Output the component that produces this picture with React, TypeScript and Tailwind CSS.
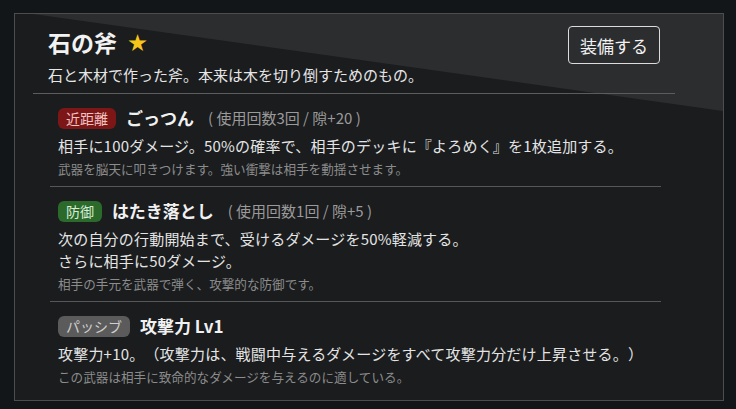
import React from 'react'

type Skill = {
  id: number
  tag: string
  tagClass: string
  name: string
  meta?: string
  lines: string[]
  flavor: string
}

const skills: Skill[] = [
  {
    id: 1,
    tag: '近距離',
    tagClass: 'bg-[#7d1616] text-[#f2c4c4]',
    name: 'ごっつん',
    meta: '( 使用回数3回 / 隙+20 )',
    lines: ['相手に100ダメージ。50%の確率で、相手のデッキに『よろめく』を1枚追加する。'],
    flavor: '武器を脳天に叩きつけます。強い衝撃は相手を動揺させます。',
  },
  {
    id: 2,
    tag: '防御',
    tagClass: 'bg-[#2b6a2b] text-[#d6ecd6]',
    name: 'はたき落とし',
    meta: '( 使用回数1回 / 隙+5 )',
    lines: ['次の自分の行動開始まで、受けるダメージを50%軽減する。', 'さらに相手に50ダメージ。'],
    flavor: '相手の手元を武器で弾く、攻撃的な防御です。',
  },
  {
    id: 3,
    tag: 'パッシブ',
    tagClass: 'bg-[#5b5b5b] text-[#cfcfcf]',
    name: '攻撃力 Lv1',
    lines: ['攻撃力+10。（攻撃力は、戦闘中与えるダメージをすべて攻撃力分だけ上昇させる。）'],
    flavor: 'この武器は相手に致命的なダメージを与えるのに適している。',
  },
]

function SkillRow({ skill, last }: { skill: Skill; last: boolean }) {
  return (
    <div className={last ? 'px-2 pt-3' : 'px-2 pt-3 pb-2 border-b border-[#555759]'}>
      <div className="flex items-center h-6">
        <span className={`rounded-md px-2 text-[14px] leading-[21px] ${skill.tagClass}`}>{skill.tag}</span>
        <span className="ml-[10px] text-[17px] font-bold text-[#f1f1f1] leading-6">{skill.name}</span>
        {skill.meta && <span className="ml-[14px] text-[15px] text-[#9a9a9a] leading-6">{skill.meta}</span>}
      </div>
      <div className="mt-[5px] text-[15px] leading-[22px] text-[#e4e4e4] tracking-[0.2px]">
        {skill.lines.map((l, i) => (
          <div key={i}>{l}</div>
        ))}
      </div>
      <div className="mt-[3px] text-[12.6px] leading-[18px] text-[#8c8c8c]">{skill.flavor}</div>
    </div>
  )
}

export default function App() {
  return (
    <div
      className="w-[736px] h-[409px] bg-[#131619] pt-[13px] pl-[14px] [text-spacing-trim:space-all]"
      style={{ fontFamily: '"Noto Sans CJK JP", "Noto Sans", sans-serif' }}
    >
      <div className="relative w-[710px] h-[388px] border border-[#4b4d4f] bg-[#1a1c1e] overflow-hidden">
        <div className="absolute inset-0 bg-[#2c2d2f] [clip-path:polygon(18px_0,100%_0,100%_97px)]" />
        <div className="relative pl-[18px] pr-[48px]">
          <div className="px-[15px] pt-[12px] pb-[7px] border-b border-[#5a5c5e]">
            <div className="flex items-start justify-between">
              <div className="mt-[1px] flex items-center h-[30px]">
                <span className="text-[23px] font-bold text-[#f2f2f2] leading-[30px]">石の斧</span>
                <span className="ml-[11px] text-[19px] text-[#f7c61a] leading-[30px]">★</span>
              </div>
              <button className="h-[38px] px-[11px] border border-[#dcdcdc] rounded-[4px] text-[17px] text-[#f2f2f2] leading-none">
                装備する
              </button>
            </div>
            <div className="text-[15px] leading-[22px] text-[#e6e6e6]">
              石と木材で作った斧。本来は木を切り倒すためのもの。
            </div>
          </div>
          <div className="ml-[17px] mr-[14px]">
            {skills.map((s, i) => (
              <SkillRow key={s.id} skill={s} last={i === skills.length - 1} />
            ))}
          </div>
        </div>
      </div>
    </div>
  )
}
